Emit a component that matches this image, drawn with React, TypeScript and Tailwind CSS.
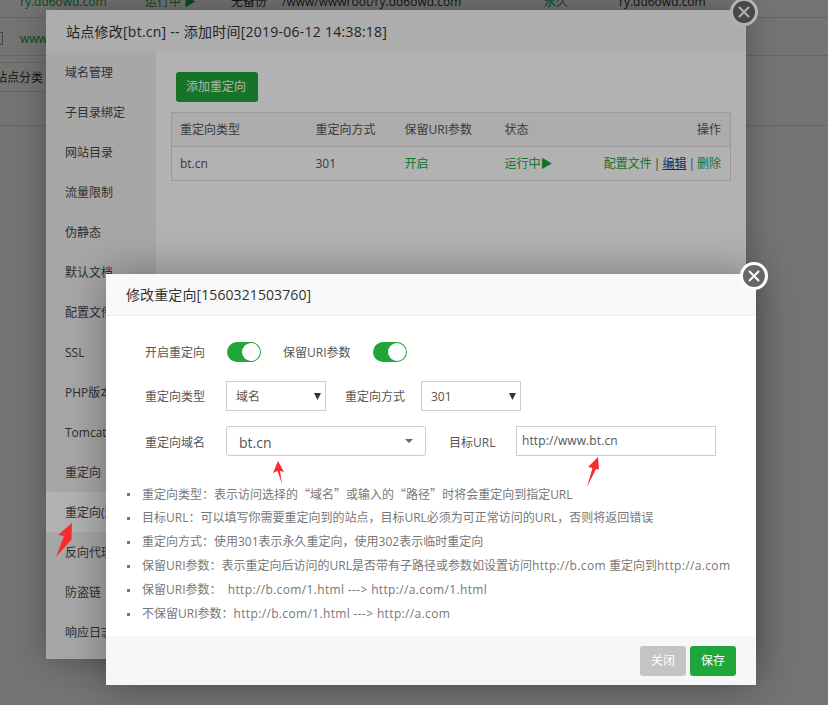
import type { ReactNode } from 'react';

const MENU = [
  '域名管理',
  '子目录绑定',
  '网站目录',
  '流量限制',
  '伪静态',
  '默认文档',
  '配置文件',
  'SSL',
  'PHP版本',
  'Tomcat',
  '重定向',
  '重定向(测试)',
  '反向代理',
  '防盗链',
  '响应日志',
];

// curly quotes come from the CJK face so they stay full width
function Quote({ children }: { children: string }) {
  return <span className="font-['Noto_Sans_CJK_SC',sans-serif]">{children}</span>;
}

function Url({ children }: { children: string }) {
  return <span className="tracking-[0.35px]">{children}</span>;
}

const NOTES: ReactNode[] = [
  <>
    重定向类型：表示访问选择的<Quote>“</Quote>域名<Quote>”</Quote>或输入的<Quote>“</Quote>路径<Quote>”</Quote>时将会重定向到指定URL
  </>,
  '目标URL：可以填写你需要重定向到的站点，目标URL必须为可正常访问的URL，否则将返回错误',
  '重定向方式：使用301表示永久重定向，使用302表示临时重定向',
  <>
    保留URI参数：表示重定向后访问的URL是否带有子路径或参数如设置访问<Url>http://b.com</Url> 重定向到<Url>http://a.com</Url>
  </>,
  <>
    保留URI参数：  <Url>http://b.com/1.html ---&gt; http://a.com/1.html</Url>
  </>,
  <>
    不保留URI参数：<Url>http://b.com/1.html ---&gt; http://a.com</Url>
  </>,
];

function CloseButton({ className }: { className: string }) {
  return (
    <div
      className={`absolute flex h-[28px] w-[28px] items-center justify-center rounded-full border-[3px] border-white bg-[#666] ${className}`}
    >
      <svg width="12" height="12" viewBox="0 0 12 12" fill="none" stroke="white" strokeWidth="2" strokeLinecap="round">
        <path d="M1.5 1.5 10.5 10.5M10.5 1.5 1.5 10.5" />
      </svg>
    </div>
  );
}

function Toggle() {
  return (
    <div className="ml-[1px] flex h-[20px] w-[34px] items-center justify-end rounded-full bg-[#20a53a] pr-[1px]">
      <div className="h-[18px] w-[18px] rounded-full bg-white" />
    </div>
  );
}

function Select({ value, width }: { value: string; width: string }) {
  return (
    <div className={`flex h-[30px] items-center justify-between border border-[#ccc] pl-[9px] pr-[4px] text-[#555] ${width}`}>
      <span className="pt-[1px]">{value}</span>
      <svg width="7" height="7" viewBox="0 0 7 7">
        <path d="M0 0H7L3.5 7Z" fill="#333" />
      </svg>
    </div>
  );
}

function Label({ children }: { children: string }) {
  return <span className="w-[81px] pt-[1px] text-[#555]">{children}</span>;
}

export default function App() {
  return (
    <div className="relative h-[705px] w-[828px] overflow-hidden bg-white font-['Open_Sans','Noto_Sans_CJK_SC',sans-serif] text-[12px] text-[#555]">
      {/* site list behind the dialogs */}
      <div className="-mt-[13px] flex h-[31px] items-center border-b border-[#ddd] pl-[20px] text-[#333]">
        <span className="w-[125px] text-[#20a53a]">ry.dd6owd.com</span>
        <span className="w-[86px] text-[#20a53a]">运行中 ▶</span>
        <span className="w-[51px]">无备份</span>
        <span className="w-[262px]">/www/wwwroot/ry.dd6owd.com</span>
        <span className="w-[75px] text-[#20a53a]">永久</span>
        <span>ry.dd6owd.com</span>
      </div>
      <div className="flex h-[38px] items-center border-b border-[#ddd] pt-[4px]">
        <span className="h-[13px] w-[3px] border-y border-r border-[#999]" />
        <span className="ml-[17px] text-[#20a53a]">www</span>
      </div>
      <div className="h-[70px] border-b border-[#ddd] pt-[6px]">
        <div className="-ml-[5px] flex h-[30px] w-[51px] items-center whitespace-nowrap border-y border-[#ddd] pt-[1px] text-[#333]">
          站点分类
        </div>
      </div>

      <div className="absolute inset-0 bg-black/35" />

      {/* site settings dialog */}
      <div className="absolute left-[46px] top-[10px] h-[649px] w-[700px] bg-white shadow-[0_0_30px_rgba(0,0,0,0.3)]">
        <div className="flex h-[42px] items-center bg-[#f8f8f8] pl-[20px] text-[14px] tracking-[0.25px] text-[#333]">
          站点修改[bt.cn] -- 添加时间[2019-06-12 14:38:18]
        </div>
        <div className="flex h-[607px]">
          <ul className="w-[110px] bg-[#f0f0f0]">
            {MENU.map((item, i) => (
              <li key={item} className={`flex h-[40px] items-center whitespace-nowrap pl-[19px] pt-[2px] text-[#444] ${i === 11 ? 'bg-white' : ''}`}>
                {item}
              </li>
            ))}
          </ul>
          <div className="flex-1 pl-[15px] pt-[20px]">
            <button className="ml-[5px] h-[30px] w-[82px] rounded-[3px] bg-[#20a53a] pr-[2px] text-white">添加重定向</button>
            <table className="mt-[10px] w-[560px] border border-[#ddd] text-left">
              <thead>
                <tr className="h-[34px] border-b border-[#ddd] bg-[#f6f6f6]">
                  <th className="w-[136px] pl-[8px] font-normal">重定向类型</th>
                  <th className="w-[89px] pl-[8px] font-normal">重定向方式</th>
                  <th className="w-[100px] pl-[8px] font-normal">保留URI参数</th>
                  <th className="pl-[8px] font-normal">状态</th>
                  <th className="pr-[9px] text-right font-normal">操作</th>
                </tr>
              </thead>
              <tbody>
                <tr className="h-[34px]">
                  <td className="pl-[8px]">bt.cn</td>
                  <td className="pl-[8px]">301</td>
                  <td className="pl-[8px] text-[#20a53a]">开启</td>
                  <td className="pl-[8px] text-[#20a53a]">运行中▶</td>
                  <td className="whitespace-nowrap pr-[9px] text-right text-[#20a53a]">
                    配置文件<span className="mx-[2px] text-[#555]">|</span>
                    <span className="text-[#0b4a8f] underline">编辑</span>
                    <span className="mx-[2px] text-[#555]">|</span>删除
                  </td>
                </tr>
              </tbody>
            </table>
          </div>
        </div>
      </div>
      <CloseButton className="left-[730px] top-[-2px]" />

      <div className="absolute inset-0 bg-black/30" />

      {/* edit redirect dialog */}
      <div className="absolute left-[106px] top-[274px] h-[411px] w-[650px] bg-white shadow-[0_0_40px_rgba(0,0,0,0.35)]">
        <div className="flex h-[42px] items-center border-b border-[#eee] bg-[#f8f8f8] pl-[20px] text-[14px] tracking-[0.1px] text-[#333]">
          修改重定向[1560321503760]
        </div>
        <div className="h-[320px] pl-[39px] pt-[26px]">
          <div className="flex h-[20px] items-center">
            <Label>开启重定向</Label>
            <Toggle />
            <span className="ml-[22px] w-[89px] pt-[1px]">保留URI参数</span>
            <Toggle />
          </div>
          <div className="mt-[19px] flex items-center">
            <Label>重定向类型</Label>
            <Select value="域名" width="w-[100px]" />
            <span className="ml-[19px] w-[76px] pt-[1px]">重定向方式</span>
            <Select value="301" width="w-[100px]" />
          </div>
          <div className="mt-[15px] flex items-center">
            <span className="w-[81px] pt-[3px]">重定向域名</span>
            <div className="flex h-[30px] w-[200px] items-center justify-between rounded-[3px] border border-[#ccc] px-[12px] text-[14px]">
              <span className="pt-[2px]">bt.cn</span>
              <svg width="8" height="4" viewBox="0 0 8 4">
                <path d="M0 0H8L4 4Z" fill="#666" />
              </svg>
            </div>
            <span className="ml-[23px] w-[67px] pt-[3px]">目标URL</span>
            <div className="flex h-[30px] w-[200px] items-center border border-[#ccc] pl-[5px] tracking-[0.1px]">http://www.bt.cn</div>
          </div>
          <ul className="mt-[26px] -ml-[18px] text-[#777]">
            {NOTES.map((note, i) => (
              <li key={i} className="flex h-[24px] items-center whitespace-pre">
                <span className="mr-[12px] h-[3px] w-[3px] bg-[#777]" />
                <span>{note}</span>
              </li>
            ))}
          </ul>
        </div>
        <div className="flex h-[49px] items-center justify-end gap-[4px] bg-[#f6f8f8] pr-[20px]">
          <button className="h-[30px] w-[46px] rounded-[3px] bg-[#c4c4c4] text-white">关闭</button>
          <button className="h-[30px] w-[46px] rounded-[3px] bg-[#20a53a] text-white">保存</button>
        </div>
      </div>
      <CloseButton className="left-[740px] top-[262px]" />

      {/* hand-drawn red markers */}
      <svg className="pointer-events-none absolute inset-0" width="828" height="705" fill="#f92c2c">
        <path d="M278 461 273 473 277.5 471 282 484 280 471 284 472Z" />
        <path d="M598 457 588 467 592.5 468 587 487 596 469 599 469.5Z" />
        <path d="M72 523 58 535 64 536 56 557 71 540 71.5 539Z" />
      </svg>
    </div>
  );
}
